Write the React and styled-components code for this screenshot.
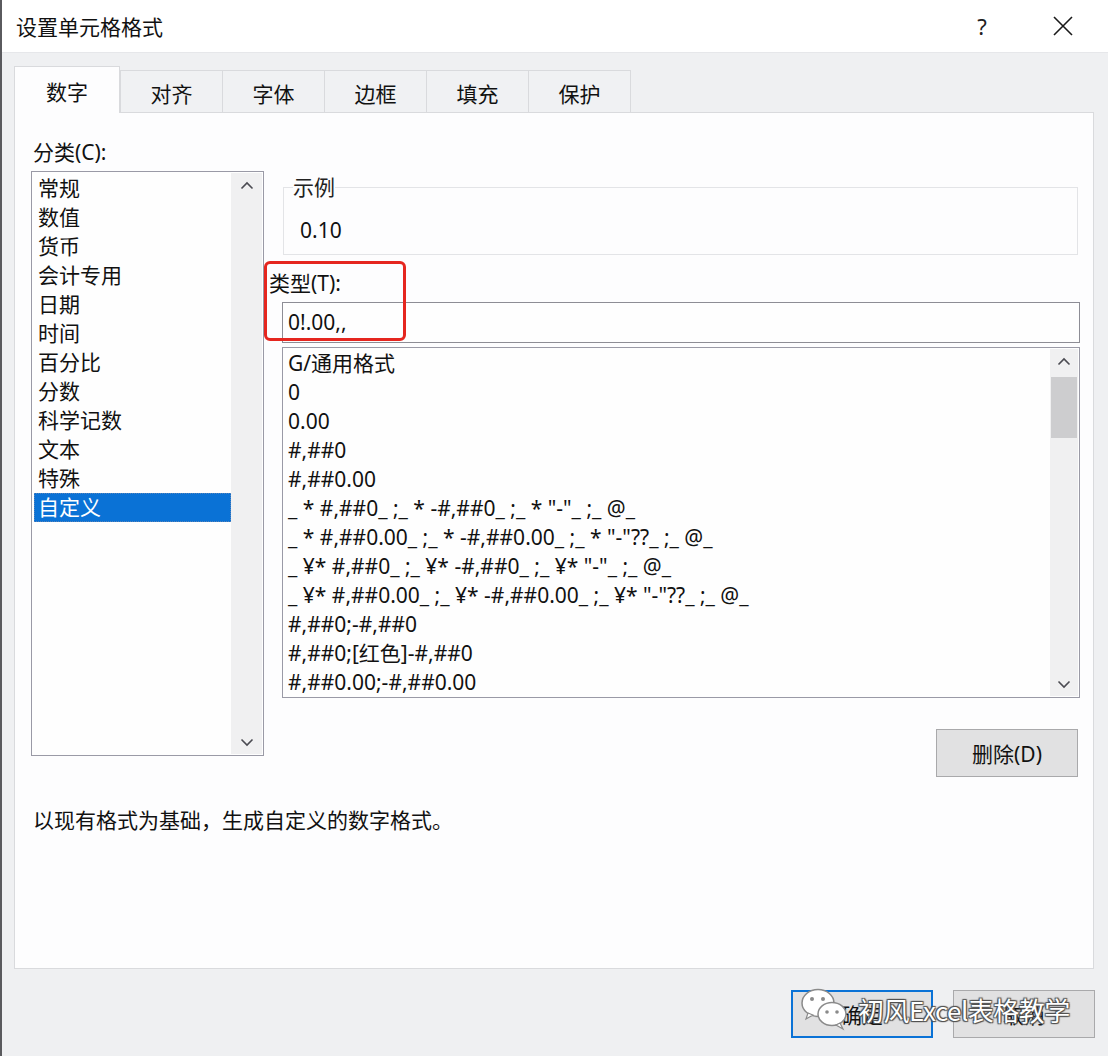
import React from "react";
import styled, { createGlobalStyle, css } from "styled-components";

const GlobalStyle = createGlobalStyle`
  html, body { margin: 0; padding: 0; background: #eff0f2; }
  body { font-family: "Noto Sans", "Noto Sans CJK SC", sans-serif; color: #111; }
  * { box-sizing: border-box; }
`;

const Dialog = styled.div`
  position: relative;
  width: 1108px;
  height: 1056px;
  display: flex;
  flex-direction: column;
  background: #eff0f2;
  border-left: 2px solid #5a5a5e;
  overflow: hidden;
`;

const TitleBar = styled.div`
  height: 53px;
  flex: none;
  display: flex;
  align-items: center;
  background: #ffffff;
  border-bottom: 1px solid #e6e7ea;
  padding-left: 14px;
`;

const Title = styled.div`
  font-family: "Noto Sans CJK SC", sans-serif;
  font-size: 21px;
  line-height: 28px;
  flex: 1;
  color: #111;
`;

const TitleButton = styled.div`
  width: ${(p) => p.$width}px;
  height: 52px;
  display: flex;
  align-items: center;
  justify-content: center;
  font-size: 22px;
  color: #222;
`;

const Body = styled.div`
  flex: 1;
  display: flex;
  flex-direction: column;
  padding: 12px 0 0 12px;
`;

const TabRow = styled.div`
  display: flex;
  align-items: flex-end;
  height: 47px;
  position: relative;
  z-index: 1;
`;

const Tab = styled.div`
  width: 103px;
  height: 42px;
  margin-right: -1px;
  border: 1px solid #d9dadd;
  border-bottom: none;
  background: #f0f1f3;
  display: flex;
  align-items: center;
  justify-content: center;
  font-family: "Noto Sans CJK SC", sans-serif;
  font-size: 21px;
  padding-top: 2px;
  color: #111;
  ${(p) =>
    p.$active &&
    css`
      width: 106px;
      height: 47px;
      margin-bottom: -1px;
      background: #fdfdfe;
      padding-top: 2px;
      margin-right: 0;
    `}
`;

const Panel = styled.div`
  width: 1080px;
  height: 857px;
  background: #fdfdfe;
  border: 1px solid #d9dadd;
  display: flex;
  flex-direction: column;
  padding: 25px 0 0 16px;
`;

const TopSection = styled.div`
  display: flex;
  align-items: flex-start;
`;

const LeftColumn = styled.div`
  width: 233px;
  display: flex;
  flex-direction: column;
`;

const Label = styled.div`
  font-size: 21px;
  line-height: 28px;
  height: 28px;
  color: #111;
  margin-left: ${(p) => p.$indent || 0}px;
  white-space: nowrap;
`;

const ListBox = styled.div`
  margin-top: ${(p) => p.$top || 0}px;
  width: ${(p) => p.$width}px;
  height: ${(p) => p.$height}px;
  border: 1px solid #9a9aa6;
  background: #fefefe;
  display: flex;
  margin-left: ${(p) => p.$indent || 0}px;
`;

const ListItems = styled.div`
  flex: 1;
  padding: ${(p) => p.$pad || "2px 0 0 2px"};
  overflow: hidden;
`;

const Item = styled.div`
  height: 29px;
  line-height: 29px;
  font-size: 21px;
  padding-left: ${(p) => p.$padLeft || 4}px;
  white-space: pre;
  color: #111;
  ${(p) =>
    p.$selected &&
    css`
      background: #0a72d6;
      color: #fff;
      outline: 1px dotted #5a84b8;
      outline-offset: -1px;
    `}
`;

const ScrollBar = styled.div`
  width: ${(p) => p.$width || 31}px;
  background: #f0f0f1;
  display: flex;
  flex-direction: column;
  align-items: center;
  justify-content: space-between;
  margin: 1px 1px 1px 0;
  position: relative;
`;

const ArrowBox = styled.div`
  height: 24px;
  width: 100%;
  display: flex;
  align-items: center;
  justify-content: center;
`;

const Thumb = styled.div`
  position: absolute;
  top: 28px;
  left: 1px;
  right: 1px;
  height: 61px;
  background: #cdcdcf;
`;

const RightColumn = styled.div`
  margin-left: 1px;
  width: 816px;
  display: flex;
  flex-direction: column;
  padding-top: 37px;
`;

const GroupBox = styled.fieldset`
  margin: 0 0 0 18px;
  width: 795px;
  height: 80px;
  border: 1px solid #e3e4e7;
  padding: 0 0 0 16px;
  display: block;
`;

const Legend = styled.legend`
  font-size: 21px;
  line-height: 24px;
  padding: 0;
  margin-left: -7px;
  color: #222;
`;

const SampleValue = styled.div`
  font-size: 21px;
  line-height: 28px;
  margin-top: 17px;
  color: #111;
`;

const TypeArea = styled.div`
  position: relative;
  margin-top: 14px;
  display: flex;
  flex-direction: column;
`;

const RedBox = styled.div`
  position: absolute;
  left: -1px;
  top: -8px;
  width: 142px;
  height: 80px;
  border: 3px solid #e5261f;
  border-radius: 6px;
  pointer-events: none;
`;

const TextInput = styled.div`
  margin: 5px 0 0 17px;
  width: 798px;
  height: 41px;
  border: 1px solid #8d8d95;
  background: #fefefe;
  font-size: 21px;
  line-height: 39px;
  padding-left: 5px;
  color: #111;
`;

const Button = styled.div`
  width: 142px;
  height: 48px;
  background: #e1e1e2;
  border: ${(p) => (p.$default ? "2px solid #0a72d6" : "1px solid #a9a9ab")};
  display: flex;
  align-items: center;
  justify-content: center;
  font-size: 21px;
  color: #111;
  margin-left: ${(p) => p.$indent || 0}px;
  margin-top: ${(p) => p.$top || 0}px;
`;

const Description = styled.div`
  margin: 29px 0 0 2px;
  font-size: 21px;
  line-height: 28px;
  color: #111;
`;

const Footer = styled.div`
  display: flex;
  justify-content: flex-end;
  gap: 20px;
  padding: 21px 13px 0 0;
`;

const Watermark = styled.div`
  position: absolute;
  left: 798px;
  top: 986px;
  display: flex;
  align-items: center;
  gap: 8px;
  pointer-events: none;
`;

const WatermarkText = styled.div`
  font-family: "Noto Sans CJK SC", sans-serif;
  font-size: 26px;
  line-height: 34px;
  color: #ffffff;
  letter-spacing: -0.5px;
  text-shadow: 0 0 1px #333, 1px 1px 1px #555, -1px -1px 1px #555, 1px -1px 1px #555, -1px 1px 1px #555;
  margin-top: 2px;
`;

const Chevron = ({ up }) => (
  <svg width="14" height="9" viewBox="0 0 14 9">
    <path
      d={up ? "M1.5 7.5 L7 2 L12.5 7.5" : "M1.5 1.5 L7 7 L12.5 1.5"}
      fill="none"
      stroke={"#4b4b52"}
      strokeWidth="1.6"
    />
  </svg>
);

const categories = ["常规", "数值", "货币", "会计专用", "日期", "时间", "百分比", "分数", "科学记数", "文本", "特殊", "自定义"];

const formats = [
  "G/通用格式",
  "0",
  "0.00",
  "#,##0",
  "#,##0.00",
  '_ * #,##0_ ;_ * -#,##0_ ;_ * "-"_ ;_ @_',
  '_ * #,##0.00_ ;_ * -#,##0.00_ ;_ * "-"??_ ;_ @_',
  '_ ¥* #,##0_ ;_ ¥* -#,##0_ ;_ ¥* "-"_ ;_ @_',
  '_ ¥* #,##0.00_ ;_ ¥* -#,##0.00_ ;_ ¥* "-"??_ ;_ @_',
  "#,##0;-#,##0",
  "#,##0;[红色]-#,##0",
  "#,##0.00;-#,##0.00",
];

const tabs = ["数字", "对齐", "字体", "边框", "填充", "保护"];

export default function App() {
  return (
    <>
      <GlobalStyle />
      <Dialog>
        <TitleBar>
          <Title>设置单元格格式</Title>
          <TitleButton $width={72}>?</TitleButton>
          <TitleButton $width={90}>
            <svg width="20" height="20" viewBox="0 0 20 20">
              <path d="M1 1 L19 19 M19 1 L1 19" stroke="#1a1a1a" strokeWidth="1.6" fill="none" />
            </svg>
          </TitleButton>
        </TitleBar>
        <Body>
          <TabRow>
            {tabs.map((t, i) => (
              <Tab key={t} $active={i === 0}>
                {t}
              </Tab>
            ))}
          </TabRow>
          <Panel>
            <TopSection>
              <LeftColumn>
                <Label $indent={2}>分类(C):</Label>
                <ListBox $top={5} $width={233} $height={585}>
                  <ListItems>
                    {categories.map((c, i) => (
                      <Item key={c} $selected={i === categories.length - 1}>
                        {c}
                      </Item>
                    ))}
                  </ListItems>
                  <ScrollBar>
                    <ArrowBox>
                      <Chevron up />
                    </ArrowBox>
                    <ArrowBox>
                      <Chevron />
                    </ArrowBox>
                  </ScrollBar>
                </ListBox>
              </LeftColumn>
              <RightColumn>
                <GroupBox>
                  <Legend>示例</Legend>
                  <SampleValue>0.10</SampleValue>
                </GroupBox>
                <TypeArea>
                  <Label $indent={4}>类型(T):</Label>
                  <TextInput>0!.00,,</TextInput>
                  <RedBox />
                </TypeArea>
                <ListBox $top={4} $width={798} $height={351} $indent={17}>
                  <ListItems $pad="1px 0 0 0">
                    {formats.map((f) => (
                      <Item key={f} $padLeft={5}>
                        {f}
                      </Item>
                    ))}
                  </ListItems>
                  <ScrollBar $width={28}>
                    <ArrowBox>
                      <Chevron up />
                    </ArrowBox>
                    <Thumb />
                    <ArrowBox>
                      <Chevron />
                    </ArrowBox>
                  </ScrollBar>
                </ListBox>
                <Button $indent={671} $top={31}>删除(D)</Button>
              </RightColumn>
            </TopSection>
            <Description>以现有格式为基础，生成自定义的数字格式。</Description>
          </Panel>
          <Footer>
            <Button $default>确定</Button>
            <Button>取消</Button>
          </Footer>
        </Body>
        <Watermark>
          <svg width="50" height="46" viewBox="0 0 50 46">
            <ellipse cx="18" cy="17" rx="16" ry="13.5" fill="#fff" stroke="#8a8a8a" strokeWidth="1.5" />
            <path d="M8 27 L6 33 L13 29 Z" fill="#fff" stroke="#8a8a8a" strokeWidth="1.2" />
            <circle cx="12" cy="13" r="2" fill="#8a8a8a" />
            <circle cx="23" cy="13" r="2" fill="#8a8a8a" />
            <ellipse cx="32" cy="28" rx="14" ry="11.5" fill="#fff" stroke="#8a8a8a" strokeWidth="1.5" />
            <path d="M40 37 L43 43 L36 39 Z" fill="#fff" stroke="#8a8a8a" strokeWidth="1.2" />
            <circle cx="27" cy="26" r="1.8" fill="#8a8a8a" />
            <circle cx="37" cy="26" r="1.8" fill="#8a8a8a" />
          </svg>
          <WatermarkText>初风Excel表格教学</WatermarkText>
        </Watermark>
      </Dialog>
    </>
  );
}
